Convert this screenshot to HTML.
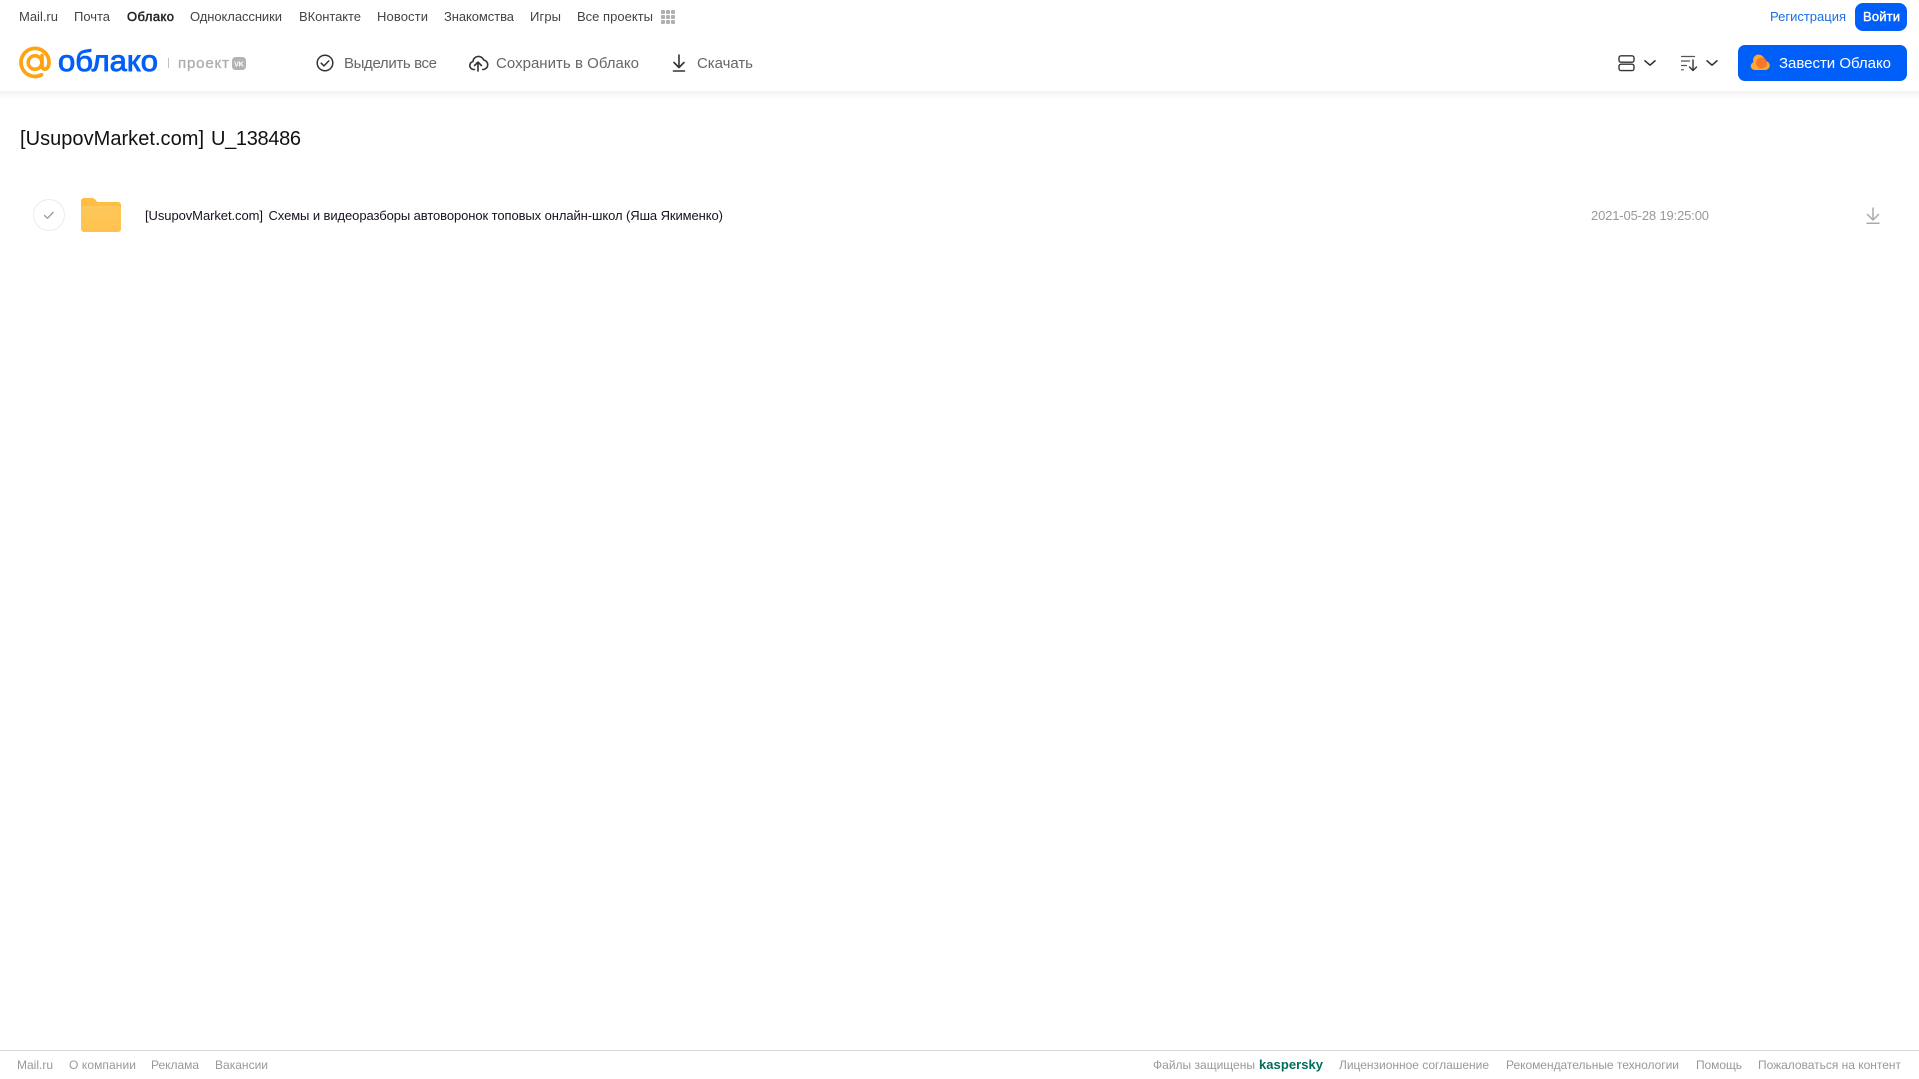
<!DOCTYPE html>
<html lang="ru">
<head>
<meta charset="utf-8">
<title>[UsupovMarket.com] U_138486</title>
<style>
html,body{margin:0;padding:0;background:#fff;width:1919px;height:1079px;overflow:hidden}
svg{display:block;position:absolute;left:0;top:0}
text{font-family:"Liberation Sans",sans-serif}
</style>
</head>
<body>
<svg width="1919" height="1079" viewBox="0 0 1919 1079" xmlns="http://www.w3.org/2000/svg">
<defs>
<linearGradient id="sh" x1="0" y1="0" x2="0" y2="1"><stop offset="0" stop-color="#f3f3f3"/><stop offset="1" stop-color="#ffffff"/></linearGradient>
<linearGradient id="fold" x1="0" y1="0" x2="0" y2="1"><stop offset="0" stop-color="#ffc85c"/><stop offset="1" stop-color="#ffc24e"/></linearGradient>
</defs>
<rect width="1919" height="1079" fill="#fff"/>
<rect x="0" y="91" width="1919" height="8" fill="url(#sh)"/>

<!-- top nav -->
<g font-size="13" fill="#444">
<text x="19" y="21" textLength="39" lengthAdjust="spacing">Mail.ru</text>
<text x="74" y="21" textLength="36" lengthAdjust="spacing">Почта</text>
<text x="127" y="21" textLength="47" lengthAdjust="spacing" fill="#222" stroke="#222" stroke-width=".45">Облако</text>
<text x="190" y="21" textLength="92" lengthAdjust="spacing">Одноклассники</text>
<text x="299" y="21" textLength="62" lengthAdjust="spacing">ВКонтакте</text>
<text x="377" y="21" textLength="51" lengthAdjust="spacing">Новости</text>
<text x="444" y="21" textLength="70" lengthAdjust="spacing">Знакомства</text>
<text x="530" y="21" textLength="31" lengthAdjust="spacing">Игры</text>
<text x="577" y="21" textLength="76" lengthAdjust="spacing">Все проекты</text>
</g>
<g fill="#b0b0b0">
<rect x="661" y="10" width="4" height="4" rx="1"/><rect x="666" y="10" width="4" height="4" rx="1"/><rect x="671" y="10" width="4" height="4" rx="1"/>
<rect x="661" y="15" width="4" height="4" rx="1"/><rect x="666" y="15" width="4" height="4" rx="1"/><rect x="671" y="15" width="4" height="4" rx="1"/>
<rect x="661" y="20" width="4" height="4" rx="1"/><rect x="666" y="20" width="4" height="4" rx="1"/><rect x="671" y="20" width="4" height="4" rx="1"/>
</g>
<text x="1770" y="21" font-size="13" fill="#1a6fe8" textLength="76" lengthAdjust="spacing">Регистрация</text>
<rect x="1855" y="3" width="52" height="28" rx="8" fill="#005ff9"/>
<text x="1863" y="21" font-size="13" fill="#fff" stroke="#fff" stroke-width=".4" textLength="37" lengthAdjust="spacing">Войти</text>

<!-- logo -->
<path d="M42 55.500V65.500C42 71 49 70.500 49 62.500A14 14 0 1 0 41.500 74.800" fill="none" stroke="#ffa310" stroke-width="3.700" stroke-linecap="round"/>
<circle cx="35" cy="62.500" r="6.800" fill="none" stroke="#ffa310" stroke-width="3.500"/>
<text x="58" y="71" font-size="30" fill="#005ff9" stroke="#005ff9" stroke-width=".9" textLength="100" lengthAdjust="spacingAndGlyphs">облако</text>
<rect x="168" y="58" width="1" height="10" fill="#c0c0c0"/>
<text x="178" y="68" font-size="15" fill="#aeaeae" stroke="#aeaeae" stroke-width=".35" textLength="51" lengthAdjust="spacing">проект</text>
<rect x="232" y="57" width="14" height="13" rx="3.500" fill="#b3b3b3"/>
<text x="234" y="66.500" font-size="7.500" font-weight="700" fill="#fff" textLength="10" lengthAdjust="spacing">VK</text>

<!-- actions -->
<circle cx="325" cy="63" r="7.800" fill="none" stroke="#333" stroke-width="1.500"/>
<path d="M321.200 63.200l2.800 2.700 4.800-5" fill="none" stroke="#333" stroke-width="1.500" stroke-linecap="round" stroke-linejoin="round"/>
<text x="344" y="68" font-size="15" fill="#666" textLength="93" lengthAdjust="spacing">Выделить все</text>

<path d="M474.500 69.500h-1a4 4 0 0 1-.6-7.900 5.600 5.600 0 0 1 10.800-1.600 4.800 4.800 0 0 1-.2 9.500h-.8" fill="none" stroke="#333" stroke-width="1.600" stroke-linecap="round" stroke-linejoin="round"/>
<path d="M478 71V62.500M474.600 65.500l3.400-3.400 3.400 3.400" fill="none" stroke="#333" stroke-width="1.600" stroke-linecap="round" stroke-linejoin="round"/>
<text x="496" y="68" font-size="15" fill="#666" textLength="143" lengthAdjust="spacing">Сохранить в Облако</text>

<path d="M679 55V67M674 62.500l5 5 5-5" fill="none" stroke="#333" stroke-width="1.600" stroke-linecap="round" stroke-linejoin="round"/>
<path d="M673.500 71h11" fill="none" stroke="#333" stroke-width="1.600" stroke-linecap="round"/>
<text x="697" y="68" font-size="15" fill="#666" textLength="56" lengthAdjust="spacing">Скачать</text>

<!-- right controls -->
<rect x="1619" y="55.800" width="15" height="6.400" rx="2" fill="none" stroke="#333" stroke-width="1.400"/>
<rect x="1619" y="64.200" width="15" height="6.400" rx="2" fill="none" stroke="#333" stroke-width="1.400"/>
<path d="M1645 60.800l5 4.400 5-4.400" fill="none" stroke="#333" stroke-width="1.600" stroke-linecap="round" stroke-linejoin="round"/>
<path d="M1681.500 56.500h13M1681.500 61h8M1681.500 65.500h5M1681.500 69.800h2" fill="none" stroke="#555" stroke-width="1.200" stroke-linecap="round"/>
<path d="M1693 60v10.500M1689.500 67l3.500 3.500 3.500-3.500" fill="none" stroke="#333" stroke-width="1.400" stroke-linecap="round" stroke-linejoin="round"/>
<path d="M1707 60.800l5 4.400 5-4.400" fill="none" stroke="#333" stroke-width="1.600" stroke-linecap="round" stroke-linejoin="round"/>

<rect x="1738" y="45" width="169" height="36" rx="7" fill="#005ff9"/>
<path d="M1755 70a4 4 0 0 1-1.500-7.800 5.500 5.500 0 0 1 9-6 5 5 0 0 1 2.500 4.800 4.500 4.500 0 0 1 .5 9z" fill="#ffa930"/>
<circle cx="1761.500" cy="63" r="5.500" fill="#f9702a" opacity=".9"/>
<text x="1779" y="68" font-size="15" fill="#fff" textLength="112" lengthAdjust="spacing">Завести Облако</text>

<!-- title -->
<text x="20" y="145" font-size="20" fill="#111" textLength="184" lengthAdjust="spacing">[UsupovMarket.com]</text>
<text x="211" y="145" font-size="20" fill="#111" textLength="90" lengthAdjust="spacing">U_138486</text>

<!-- row -->
<circle cx="49" cy="215" r="15.500" fill="#fff" stroke="#ececec" stroke-width="1"/>
<path d="M44.500 215.500l3 2.800 5.500-5.800" fill="none" stroke="#999" stroke-width="1.300" stroke-linecap="round" stroke-linejoin="round"/>
<path d="M81 201a3 3 0 0 1 3-3h8c2 0 3 1 4 2.500 .5 1 1.300 1.500 2.500 1.500H118a3 3 0 0 1 3 3v4H81z" fill="#ffbd44"/>
<rect x="81" y="206" width="40" height="26" rx="3" fill="url(#fold)"/>
<text x="145" y="220" font-size="13" fill="#1a1020" textLength="118" lengthAdjust="spacing">[UsupovMarket.com]</text>
<text x="268.500" y="220" font-size="13" fill="#1a1020" textLength="454.500" lengthAdjust="spacing">Схемы и видеоразборы автоворонок топовых онлайн-школ (Яша Якименко)</text>
<text x="1591" y="220" font-size="13" fill="#999" textLength="118" lengthAdjust="spacing">2021-05-28 19:25:00</text>
<path d="M1873 208V220M1867.500 214.500l5.500 5.500 5.500-5.500" fill="none" stroke="#aaa" stroke-width="1.500" stroke-linecap="round" stroke-linejoin="round"/>
<rect x="1866.500" y="222.500" width="13" height="1.500" fill="#aaa"/>

<!-- footer -->
<rect x="0" y="1050" width="1919" height="1" fill="#d9d9d9"/>
<g font-size="12" fill="#999">
<text x="17" y="1069" textLength="36" lengthAdjust="spacing">Mail.ru</text>
<text x="69" y="1069" textLength="67" lengthAdjust="spacing">О компании</text>
<text x="151" y="1069" textLength="48" lengthAdjust="spacing">Реклама</text>
<text x="215" y="1069" textLength="53" lengthAdjust="spacing">Вакансии</text>
<text x="1153" y="1069" textLength="102" lengthAdjust="spacing">Файлы защищены</text>
<text x="1339" y="1069" textLength="150" lengthAdjust="spacing">Лицензионное соглашение</text>
<text x="1506" y="1069" textLength="173" lengthAdjust="spacing">Рекомендательные технологии</text>
<text x="1696" y="1069" textLength="46" lengthAdjust="spacing">Помощь</text>
<text x="1758" y="1069" textLength="143" lengthAdjust="spacing">Пожаловаться на контент</text>
</g>
<text x="1259" y="1069" font-size="13" font-weight="700" fill="#006d5c" textLength="64" lengthAdjust="spacing">kaspersky</text>
</svg>
</body>
</html>
